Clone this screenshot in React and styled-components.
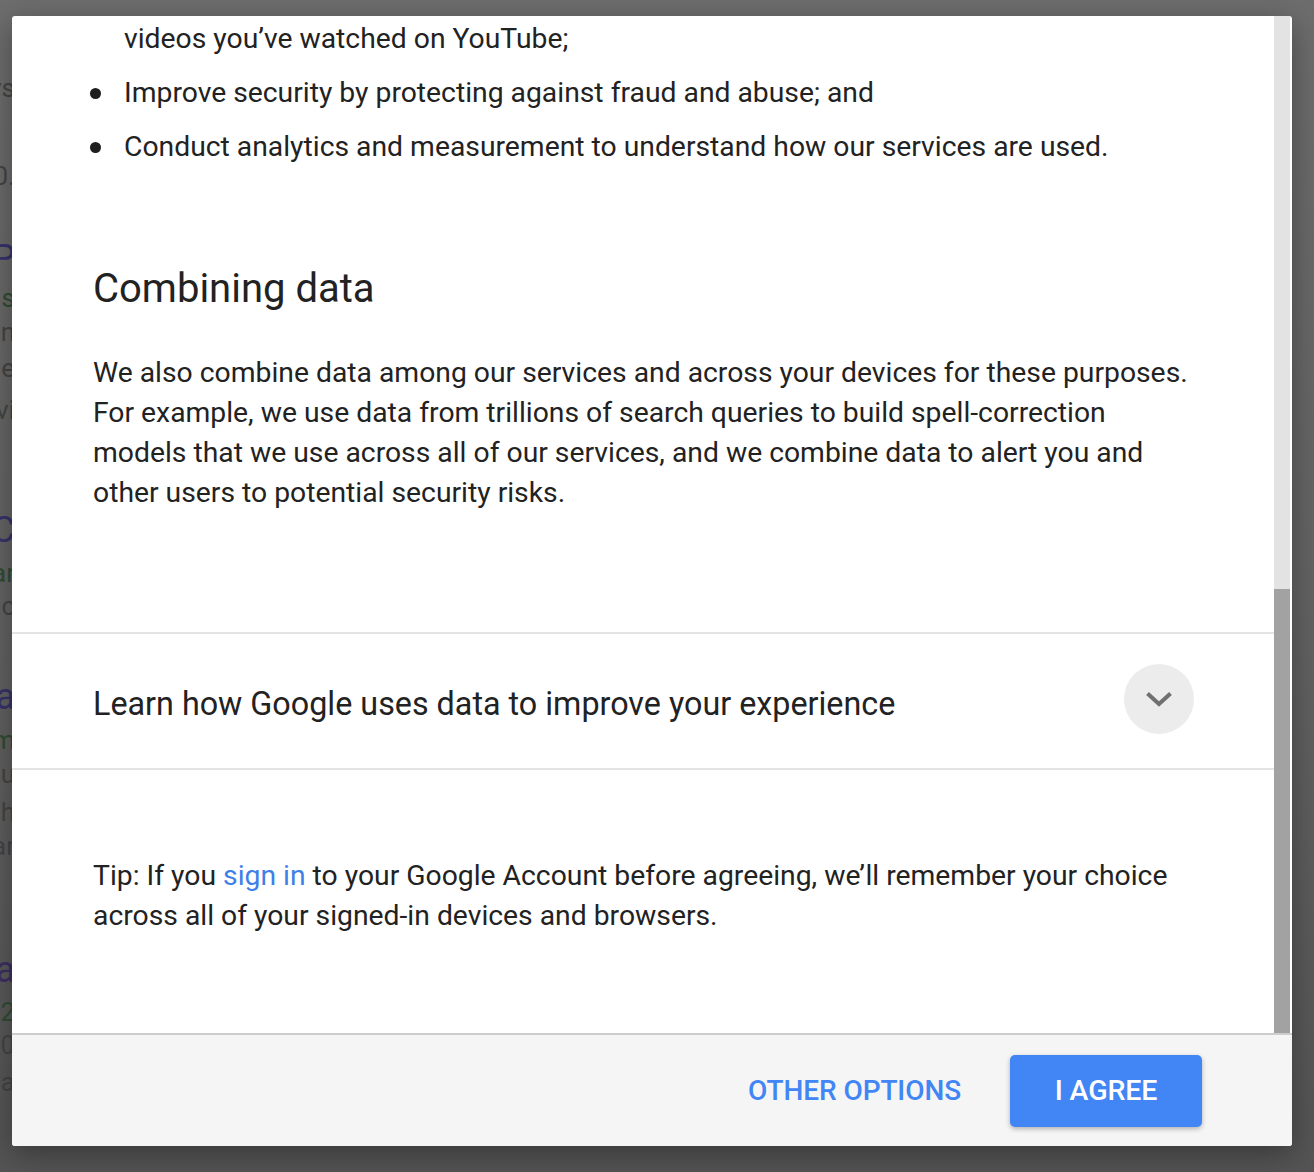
import React from "react";
import styled, { createGlobalStyle } from "styled-components";

const GlobalStyle = createGlobalStyle`
  html, body {
    margin: 0;
    padding: 0;
  }
  body {
    font-family: Roboto, "Liberation Sans", Arial, sans-serif;
    -webkit-font-smoothing: antialiased;
  }
`;

// page behind the dialog, dimmed by the scrim
const Page = styled.div`
  position: relative;
  width: 1314px;
  height: 1172px;
  overflow: hidden;
  background: linear-gradient(180deg, #6d6d6d 0%, #626262 55%, #545454 100%);
`;

const BgColumn = styled.div`
  display: flex;
  flex-direction: column;
  align-items: flex-end;
  width: 15px;
`;

const BgLine = styled.div`
  margin-top: ${(p) => p.$gap}px;
  height: 32px;
  line-height: 32px;
  font-size: ${(p) => (p.$big ? 36 : 26)}px;
  color: ${(p) => p.$color};
  white-space: nowrap;
`;

const Dialog = styled.div`
  position: absolute;
  left: 12px;
  top: 16px;
  width: 1280px;
  height: 1130px;
  display: flex;
  flex-direction: column;
  background: #fff;
  border-radius: 3px;
  overflow: hidden;
  box-shadow: 0 8px 30px rgba(0, 0, 0, 0.35);
`;

const Body = styled.div`
  flex: 1;
  display: flex;
  min-height: 0;
`;

const Content = styled.div`
  flex: 1;
  overflow: hidden;
  padding-top: 3px;
  color: #222;
`;

const Track = styled.div`
  width: 16px;
  margin-right: 2px;
  display: flex;
  flex-direction: column;
  background: #e3e3e3;
`;

const Thumb = styled.div`
  margin-top: auto;
  height: 444px;
  background: #a2a2a2;
`;

const Section = styled.div`
  padding: 0 60px 0 81px;
`;

const List = styled.ul`
  list-style: none;
  margin: 0;
  padding: 0;
  display: flex;
  flex-direction: column;
  gap: 14px;
`;

const Item = styled.li`
  position: relative;
  padding-left: 31px;
  font-size: 28.3px;
  line-height: 40px;
  white-space: nowrap;

  &::before {
    content: "";
    display: ${(p) => (p.$cont ? "none" : "block")};
    position: absolute;
    left: -3px;
    top: 15px;
    width: 11px;
    height: 11px;
    border-radius: 50%;
    background: #1f1f1f;
  }
`;

const Heading = styled.h2`
  margin: 98px 0 0;
  font-size: 40px;
  line-height: 48px;
  font-weight: 400;
  color: #222;
`;

const Para = styled.p`
  margin: ${(p) => p.$top}px 0 0;
  font-size: 28.3px;
  line-height: 40px;
  white-space: nowrap;
`;

const Link = styled.a`
  color: #3f7fe8;
  text-decoration: none;
`;

const Divider = styled.div`
  height: 2px;
  background: #e4e4e4;
  margin-top: ${(p) => p.$top}px;
`;

const Expander = styled.div`
  height: 134px;
  display: flex;
  align-items: center;
  justify-content: space-between;
  padding: 0 80px 0 81px;
`;

const ExpanderText = styled.span`
  font-size: 32.3px;
  line-height: 40px;
  margin-top: 6px;
  color: #222;
`;

const RoundButton = styled.button`
  width: 70px;
  height: 70px;
  margin-top: -4px;
  border: none;
  border-radius: 50%;
  background: #ececec;
  display: flex;
  align-items: center;
  justify-content: center;
  padding: 0;
`;

const Footer = styled.div`
  height: 111px;
  border-top: 2px solid #cdcdcd;
  background: #f5f5f5;
  display: flex;
  align-items: center;
  justify-content: flex-end;
  gap: 33px;
  padding-right: 90px;
`;

const TextButton = styled.button`
  border: none;
  background: none;
  padding: 0 16px;
  height: 72px;
  font-family: Roboto, "Liberation Sans", Arial, sans-serif;
  font-size: 28px;
  font-weight: 500;
  color: #4285f4;
  letter-spacing: -0.1px;
`;

const PrimaryButton = styled.button`
  width: 192px;
  height: 72px;
  border: none;
  border-radius: 5px;
  background: #4285f4;
  color: #fff;
  font-family: Roboto, "Liberation Sans", Arial, sans-serif;
  font-size: 28.5px;
  font-weight: 500;
  letter-spacing: -0.1px;
  box-shadow: 0 2px 5px rgba(0, 0, 0, 0.28);
`;

const Chevron = () => (
  <svg width="28" height="16" viewBox="0 0 28 16">
    <path
      d="M2.5 2.5 L14 13 L25.5 2.5"
      fill="none"
      stroke="#707070"
      strokeWidth="4"
    />
  </svg>
);

const bgLines = [
  { y: 88, t: "ys", c: "#444" },
  { y: 176, t: "0.", c: "#444" },
  { y: 258, t: "P", c: "#36336c", big: true },
  { y: 298, t: "s", c: "#2f4c31" },
  { y: 332, t: "en", c: "#444" },
  { y: 368, t: "e", c: "#444" },
  { y: 410, t: "vi", c: "#444" },
  { y: 530, t: "C", c: "#36336c", big: true },
  { y: 573, t: "ar", c: "#2f4c31" },
  { y: 606, t: "ac", c: "#444" },
  { y: 697, t: "a", c: "#36336c", big: true },
  { y: 740, t: "m", c: "#2f4c31" },
  { y: 774, t: "su", c: "#444" },
  { y: 812, t: "h", c: "#444" },
  { y: 846, t: "ar", c: "#444" },
  { y: 970, t: "a", c: "#3e2e64", big: true },
  { y: 1012, t: "72", c: "#2f4c31" },
  { y: 1045, t: "0", c: "#444" },
  { y: 1082, t: "a", c: "#444" },
];

export default function App() {
  let prev = 0;
  return (
    <Page>
      <GlobalStyle />
      <BgColumn>
        {bgLines.map((l, i) => {
          const gap = l.y - 16 - prev;
          prev = l.y + 16;
          return (
            <BgLine key={i} $gap={gap} $color={l.c} $big={l.big}>
              {l.t}
            </BgLine>
          );
        })}
      </BgColumn>

      <Dialog>
        <Body>
          <Content>
            <Section>
              <List>
                <Item $cont>videos you’ve watched on YouTube;</Item>
                <Item>Improve security by protecting against fraud and abuse; and</Item>
                <Item>
                  Conduct analytics and measurement to understand how our services are used.
                </Item>
              </List>
              <Heading>Combining data</Heading>
              <Para $top={40}>
                We also combine data among our services and across your devices for these purposes.
                <br />
                For example, we use data from trillions of search queries to build spell-correction
                <br />
                models that we use across all of our services, and we combine data to alert you and
                <br />
                other users to potential security risks.
              </Para>
            </Section>
            <Divider $top={119} />
            <Expander>
              <ExpanderText>Learn how Google uses data to improve your experience</ExpanderText>
              <RoundButton>
                <Chevron />
              </RoundButton>
            </Expander>
            <Divider $top={0} />
            <Section>
              <Para $top={86}>
                Tip: If you <Link>sign in</Link> to your Google Account before agreeing, we’ll
                remember your choice
                <br />
                across all of your signed-in devices and browsers.
              </Para>
            </Section>
          </Content>
          <Track>
            <Thumb />
          </Track>
        </Body>
        <Footer>
          <TextButton>OTHER OPTIONS</TextButton>
          <PrimaryButton>I AGREE</PrimaryButton>
        </Footer>
      </Dialog>
    </Page>
  );
}
